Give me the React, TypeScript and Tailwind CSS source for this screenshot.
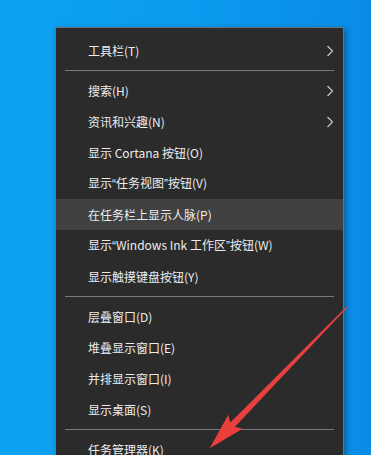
import React from "react";

type Item =
  | { kind: "item"; label: string; sub?: boolean; active?: boolean }
  | { kind: "sep" };

const items: Item[] = [
  { kind: "item", label: "工具栏(T)", sub: true },
  { kind: "sep" },
  { kind: "item", label: "搜索(H)", sub: true },
  { kind: "item", label: "资讯和兴趣(N)", sub: true },
  { kind: "item", label: "显示 Cortana 按钮(O)" },
  { kind: "item", label: "显示“任务视图”按钮(V)" },
  { kind: "item", label: "在任务栏上显示人脉(P)", active: true },
  { kind: "item", label: "显示“Windows Ink 工作区”按钮(W)" },
  { kind: "item", label: "显示触摸键盘按钮(Y)" },
  { kind: "sep" },
  { kind: "item", label: "层叠窗口(D)" },
  { kind: "item", label: "堆叠显示窗口(E)" },
  { kind: "item", label: "并排显示窗口(I)" },
  { kind: "item", label: "显示桌面(S)" },
  { kind: "sep" },
  { kind: "item", label: "任务管理器(K)" },
];

// quotes render half-width in the original (YaHei), so set them in a latin face
function Label({ text }: { text: string }) {
  const parts = text.split(/([“”])/);
  return (
    <span className="whitespace-nowrap">
      {parts.map((p, i) =>
        p === "“" || p === "”" ? (
          <span key={i} className="font-['Liberation_Sans']">
            {p}
          </span>
        ) : (
          <React.Fragment key={i}>{p}</React.Fragment>
        )
      )}
    </span>
  );
}

function Chevron() {
  return (
    <svg width="8" height="12" viewBox="0 0 8 12" className="shrink-0">
      <path d="M1.5 1 L6.5 6 L1.5 11" fill="none" stroke="#c8c8c8" strokeWidth="1.2" />
    </svg>
  );
}

function Arrow() {
  return (
    <svg
      width="371"
      height="455"
      viewBox="0 0 371 455"
      className="pointer-events-none absolute left-0 top-0"
    >
      <g transform="translate(347,307) rotate(134.2)">
        <polygon points="0,-0.6 0,0.6 168,3.2 168,-3.2" fill="#e8403c" />
        <polygon points="160,-10 197,0 160,10 166,0" fill="#ea3f3b" />
      </g>
    </svg>
  );
}

export default function App() {
  return (
    <div
      className="relative h-[455px] w-[371px] overflow-hidden bg-gradient-to-r from-[#0ea2f2] via-[#0b9bef] to-[#0a8ce6] pl-[55px] pt-[27px]"
      style={{ fontFamily: '"Noto Sans CJK SC", "Noto Sans", sans-serif' }}
    >
      <div className="w-[289px] border-l border-t border-r border-[#66747d] bg-[#2b2b2b] pt-[7px] shadow-[2px_2px_6px_rgba(0,0,0,0.35)]">
        {items.map((it, i) =>
          it.kind === "sep" ? (
            <div key={i} className="flex h-[9px] items-center px-[9px]">
              <div className="h-px w-full bg-[#7a7a7a]" />
            </div>
          ) : (
            <div
              key={i}
              className={`flex h-[31px] items-center justify-between pl-[32px] pr-[9px] text-[12px] text-[#ececec] ${
                it.active ? "bg-[#414141]" : ""
              }`}
            >
              <Label text={it.label} />
              {it.sub && <Chevron />}
            </div>
          )
        )}
      </div>
      <Arrow />
    </div>
  );
}
